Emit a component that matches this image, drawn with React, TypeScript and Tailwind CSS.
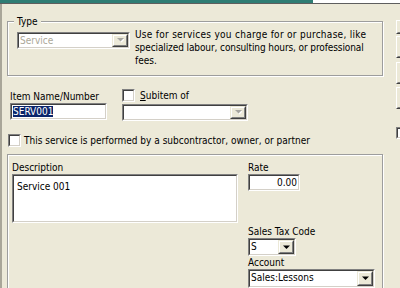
import React from "react";

function Sunken({ className = "", innerClassName = "", children }: { className?: string; innerClassName?: string; children?: React.ReactNode }) {
  return (
    <div className={`border border-t-[#808080] border-l-[#808080] border-b-white border-r-white ${className}`}>
      <div className={`h-full border border-t-[#404040] border-l-[#404040] border-b-[#d4d0c8] border-r-[#d4d0c8] bg-white ${innerClassName}`}>
        {children}
      </div>
    </div>
  );
}

function Arrow({ disabled }: { disabled?: boolean }) {
  return (
    <svg width="7" height="5" viewBox="0 0 7 5">
      {disabled ? (
        <>
          <polygon points="1,1 8,1 4.5,4.5" fill="#ffffff" />
          <polygon points="0,0 7,0 3.5,3.5" fill="#a7a6a0" />
        </>
      ) : (
        <polygon points="0,0.5 7,0.5 3.5,4" fill="#000000" />
      )}
    </svg>
  );
}

function DropButton({ disabled }: { disabled?: boolean }) {
  return (
    <div className="w-[16px] h-full border border-t-[#ece9d8] border-l-[#ece9d8] border-b-[#404040] border-r-[#404040] bg-[#ece9d8]">
      <div className="h-full border border-t-white border-l-white border-b-[#808080] border-r-[#808080] flex items-center justify-center">
        <Arrow disabled={disabled} />
      </div>
    </div>
  );
}

function Combo({ className = "", text = "", textClass = "", disabled }: { className?: string; text?: string; textClass?: string; disabled?: boolean }) {
  return (
    <Sunken className={className} innerClassName="flex">
      <div className={`flex-1 pl-[1px] leading-[13px] whitespace-nowrap overflow-hidden ${textClass}`}>{text}</div>
      <DropButton disabled={disabled} />
    </Sunken>
  );
}

function CheckBox() {
  return <Sunken className="w-[13px] h-[13px] shrink-0" />;
}

function RaisedButton({ className = "" }: { className?: string }) {
  return (
    <div className={`w-[80px] border border-t-white border-l-white border-b-[#404040] border-r-[#404040] bg-[#ece9d8] ${className}`}>
      <div className="h-full border border-t-[#ece9d8] border-l-[#ece9d8] border-b-[#808080] border-r-[#808080]" />
    </div>
  );
}

export default function App() {
  return (
    <div className="w-[400px] h-[288px] overflow-hidden bg-[#ece9d8] text-black text-[10px] leading-[13px] font-['DejaVu_Sans_Condensed','Liberation_Sans',sans-serif]">
      <div className="flex h-[3px]">
        <div className="w-[313px] bg-[#2f7d74]" />
        <div className="flex-1 bg-white" />
      </div>
      <div className="h-px bg-[#5e5e5e]" />
      <div className="flex border-l-2 border-l-[#a9a699]">
        {/* main column */}
        <div className="w-[394px] shrink-0 pl-[5px] pt-[11px]">
          <fieldset className="w-[376px] border border-[#9d9d9d] shadow-[inset_1px_1px_#fff,1px_1px_#fff] pb-[8px]">
            <legend className="ml-[6px] px-[3px] bg-[#ece9d8] leading-[13px]">Type</legend>
            <div className="flex items-start">
              <Combo className="ml-[9px] mt-[4px] w-[113px] h-[17px] shrink-0" text="Service" textClass="text-[#aca899]" disabled />
              <div className="ml-[5px] whitespace-nowrap flex flex-col">
                <span className="tracking-[0.28px]">Use for services you charge for or purchase, like</span>
                <span className="tracking-[-0.1px]">specialized labour, consulting hours, or professional</span>
                <span>fees.</span>
              </div>
            </div>
          </fieldset>

          <div className="flex items-start mt-[13px]">
            <div className="ml-[3px] mt-[1px] flex flex-col">
              <div>Item Name/Number</div>
              <Sunken className="w-[97px] h-[17px]" innerClassName="pl-[1px]">
                <span className="bg-[#0a246a] text-white">SERV001</span>
              </Sunken>
            </div>
            <div className="ml-[15px] flex flex-col">
              <div className="flex items-center h-[13px]">
                <CheckBox />
                <span className="ml-[5px]">
                  <span className="underline">S</span>ubitem of
                </span>
              </div>
              <Combo className="mt-[2px] w-[126px] h-[17px]" disabled />
            </div>
          </div>

          <div className="flex items-center mt-[13px] ml-[1px]">
            <CheckBox />
            <span className="ml-[3px]">This service is performed by a subcontractor, owner, or partner</span>
          </div>

          <div className="mt-[7px] w-[376px] h-[160px] border border-[#9d9d9d] shadow-[inset_1px_1px_#fff,1px_1px_#fff] pl-[4px] pt-[6px] flex">
            <div className="w-[226px] flex flex-col">
              <div>Description</div>
              <Sunken className="h-[49px]" innerClassName="pl-[3px] pt-[4px]">
                Service 001
              </Sunken>
            </div>
            <div className="ml-[10px] flex flex-col">
              <div>Rate</div>
              <Sunken className="w-[52px] h-[17px]" innerClassName="text-right pr-[1px]">
                0.00
              </Sunken>
              <div className="mt-[34px]">Sales Tax Code</div>
              <Combo className="w-[48px] h-[18px]" text="S" />
              <div>Account</div>
              <Combo className="w-[127px] h-[19px]" text="Sales:Lessons" />
            </div>
          </div>
        </div>

        {/* right column, partially visible buttons */}
        <div className="flex-1 overflow-hidden pt-[16px] flex flex-col">
          <RaisedButton className="h-[14px]" />
          <RaisedButton className="h-[22px] mt-[2px]" />
          <RaisedButton className="h-[22px] mt-[4px]" />
          <RaisedButton className="h-[22px] mt-[3px]" />
          <Sunken className="w-[13px] h-[12px] mt-[18px]" />
        </div>
      </div>
    </div>
  );
}
